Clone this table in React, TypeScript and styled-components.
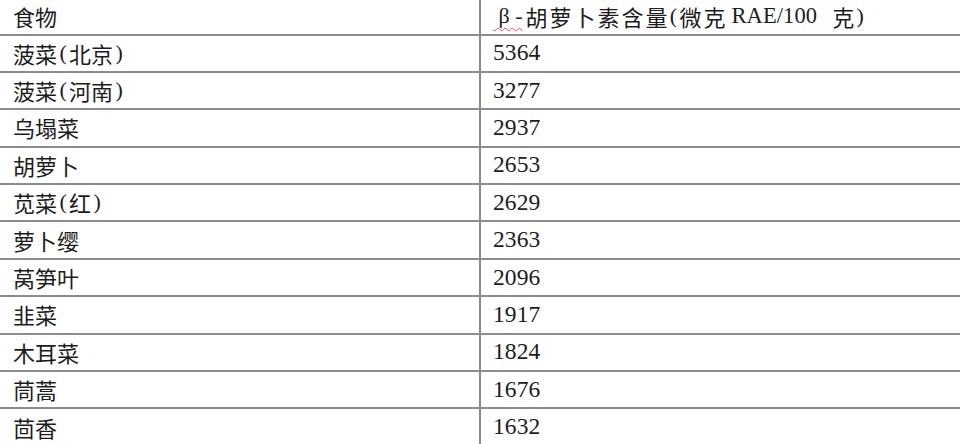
import React from "react";
import styled, { createGlobalStyle } from "styled-components";

const GlobalStyle = createGlobalStyle`
  html, body {
    margin: 0;
    padding: 0;
    background: #fff;
    overflow: hidden;
  }
`;

const Table = styled.div`
  width: 960px;
  height: 444px;
  overflow: hidden;
  display: grid;
  grid-template-columns: 481px 1fr;
  font-family: "Liberation Serif", "Noto Sans CJK SC", serif;
  font-size: 22px;
  color: #1c1c1c;
`;

const Cell = styled.div<{ $header?: boolean; $left?: boolean }>`
  box-sizing: border-box;
  height: ${({ $header }) => ($header ? "35.5px" : "37.4px")};
  display: flex;
  align-items: center;
  padding-left: ${({ $left }) => ($left ? "13px" : "12px")};
  padding-bottom: 1px;
  border-bottom: 2px solid #8c8c8c;
  border-right: ${({ $left }) => ($left ? "2px solid #8c8c8c" : "none")};
  letter-spacing: ${({ $header, $left }) => ($header && !$left ? "2px" : "0")};
  white-space: pre;
`;

const Num = styled.span<{ $header?: boolean }>`
  font-size: ${({ $header }) => ($header ? "22.5px" : "23.5px")};
  letter-spacing: 0.1px;
  margin-left: ${({ $header }) => ($header ? "4px" : "0")};
`;

const Paren = styled.span<{ $narrow?: boolean }>`
  display: inline-block;
  width: ${({ $narrow }) => ($narrow ? "0.45em" : "0.55em")};
  text-align: center;
`;

const Squiggle = styled.span`
  letter-spacing: 0;
  margin-right: 3px;
  text-decoration: underline wavy #e0505a;
  text-decoration-thickness: 1px;
  text-underline-offset: 4px;
`;

const rows: [string, string, string?][] = [
  ["菠菜", "5364", "北京"],
  ["菠菜", "3277", "河南"],
  ["乌塌菜", "2937"],
  ["胡萝卜", "2653"],
  ["苋菜", "2629", "红"],
  ["萝卜缨", "2363"],
  ["莴笋叶", "2096"],
  ["韭菜", "1917"],
  ["木耳菜", "1824"],
  ["茼蒿", "1676"],
  ["茴香", "1632"],
];

export default function App() {
  return (
    <>
      <GlobalStyle />
      <Table>
        <Cell $header $left>食物</Cell>
        <Cell $header>
          <Squiggle> β -</Squiggle>胡萝卜素含量<Paren $narrow>(</Paren>微克<Num $header>RAE/100</Num>  克<Paren $narrow>)</Paren>
        </Cell>
        {rows.map(([food, value, note]) => (
          <React.Fragment key={value}>
            <Cell $left>
              {food}
              {note && (
                <>
                  <Paren>(</Paren>
                  {note}
                  <Paren>)</Paren>
                </>
              )}
            </Cell>
            <Cell>
              <Num>{value}</Num>
            </Cell>
          </React.Fragment>
        ))}
      </Table>
    </>
  );
}
